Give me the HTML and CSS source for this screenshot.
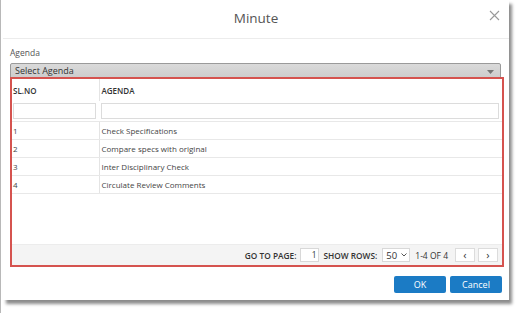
FILE: index.html
```html
<!DOCTYPE html>
<html>
<head>
<meta charset="utf-8">
<link rel="stylesheet" href="styles.css">
</head>
<body>
<div class="dialog">
  <div class="dlg-header">
    <span class="title">Minute</span>
    <span class="close">
      <svg width="11" height="11" viewBox="0 0 11 11"><path d="M1 1L10 10M10 1L1 10" stroke="#9a9a9a" stroke-width="1.1" fill="none"/></svg>
    </span>
  </div>
  <div class="dlg-body">
    <div class="label">Agenda</div>
    <div class="select-bar">
      <span>Select Agenda</span>
      <svg class="caret" width="7" height="4" viewBox="0 0 7 4"><path d="M0 0H7L3.5 4Z" fill="#777"/></svg>
    </div>
    <div class="grid-box">
      <table class="grid">
        <thead>
          <tr class="hdr"><th class="c1">SL.NO</th><th class="c2">AGENDA</th></tr>
          <tr class="filter"><td class="c1"><div class="finput"></div></td><td class="c2"><div class="finput"></div></td></tr>
        </thead>
        <tbody>
          <tr><td class="c1">1</td><td class="c2">Check Specifications</td></tr>
          <tr><td class="c1">2</td><td class="c2">Compare specs with original</td></tr>
          <tr><td class="c1">3</td><td class="c2">Inter Disciplinary Check</td></tr>
          <tr><td class="c1">4</td><td class="c2">Circulate Review Comments</td></tr>
        </tbody>
      </table>
      <div class="spacer"></div>
      <div class="pager">
        <span class="plabel">GO TO PAGE:</span>
        <span class="pinput">1</span>
        <span class="plabel">SHOW ROWS:</span>
        <span class="psel">50
          <svg width="6" height="4" viewBox="0 0 6 4"><path d="M0.5 0.5L3 3L5.5 0.5" stroke="#555" stroke-width="1" fill="none"/></svg>
        </span>
        <span class="pcount">1-4 OF 4</span>
        <span class="pbtn">&lsaquo;</span>
        <span class="pbtn">&rsaquo;</span>
      </div>
    </div>
  </div>
  <div class="dlg-footer">
    <button class="btn">OK</button>
    <button class="btn">Cancel</button>
  </div>
</div>
</body>
</html>
```

FILE: styles.css
```css
html, body {
  margin: 0;
  padding: 0;
  background: #ffffff;
}
body {
  font-family: "Open Sans", "Noto Sans", sans-serif;
  color: #444;
  padding-left: 2px;
  border-left: 1px solid #b8b8b8;
  width: 520px;
  height: 313px;
  box-sizing: border-box;
}
.dialog {
  width: 506px;
  height: 300px;
  background: #fff;
  box-shadow: 3px 4px 3px rgba(0,0,0,0.45);
  display: flex;
  flex-direction: column;
}
.dlg-header {
  height: 38px;
  border-bottom: 1px solid #ececec;
  display: flex;
  align-items: center;
  justify-content: center;
  position: relative;
}
.title {
  font-size: 13.5px;
  color: #555;
  margin-top: -2px;
}
.close {
  position: absolute;
  right: 9px;
  top: 10px;
  line-height: 0;
}
.dlg-body {
  padding: 8px 5px 0 7px;
}
.label {
  font-size: 8.5px;
  color: #555;
  line-height: 12px;
  height: 16px;
}
.select-bar {
  width: 491px;
  height: 15px;
  box-sizing: border-box;
  border: 1px solid #9a9a9a;
  border-radius: 2px 2px 0 0;
  background: linear-gradient(#dadada, #cdcdcd);
  display: flex;
  align-items: center;
  justify-content: space-between;
  padding: 0 6px 0 4px;
  font-size: 9px;
  color: #333;
}
.caret {
  margin-top: 3px;
}
.grid-box {
  width: 494px;
  height: 190px;
  box-sizing: border-box;
  border: 2px solid #d5534f;
  margin-top: -1px;
  display: flex;
  flex-direction: column;
}
.grid {
  border-collapse: collapse;
  width: 100%;
  font-size: 8px;
  color: #444;
}
.grid th, .grid td {
  padding: 0;
}
.grid .c1 {
  width: 83px;
  padding-left: 1px;
  border-right: 1px solid #e4e4e4;
}
.grid .c2 {
  padding-left: 2px;
  padding-right: 3px;
}
.hdr th {
  height: 21px;
  text-align: left;
  font-weight: 600;
  color: #333;
  font-size: 8px;
  padding-top: 1px;
}
.filter td {
  height: 20px;
  border-bottom: 1px solid #e8e8e8;
  vertical-align: middle;
}
.filter .c1 {
  border-right: none;
  padding-left: 1px;
  padding-right: 3px;
}
.finput {
  height: 16px;
  box-sizing: border-box;
  border: 1px solid #dcdcdc;
  background: #fff;
}
tbody td {
  height: 17px;
  border-bottom: 1px solid #e8e8e8;
}
.spacer {
  flex: 1;
}
.pager {
  height: 20px;
  background: #f4f4f4;
  border-top: 1px solid #ececec;
  display: flex;
  align-items: center;
  justify-content: flex-end;
  padding-right: 4px;
  font-size: 8.3px;
  font-weight: 600;
  color: #333;
}
.plabel {
  margin-right: 4px;
}
.pinput {
  width: 19px;
  height: 14px;
  box-sizing: border-box;
  border: 1px solid #d8d8d8;
  background: #fff;
  text-align: right;
  padding-right: 2px;
  font-weight: 400;
  line-height: 12px;
  margin-right: 4px;
}
.psel {
  width: 28px;
  height: 14px;
  box-sizing: border-box;
  border: 1px solid #d8d8d8;
  background: #fff;
  display: flex;
  align-items: center;
  gap: 4px;
  padding-left: 3px;
  font-size: 9.5px;
  font-weight: 400;
  margin-left: 1px;
  margin-right: 5px;
}
.pcount {
  font-weight: 400;
  font-size: 8.5px;
  margin-right: 4px;
}
.pbtn {
  width: 20px;
  height: 14px;
  box-sizing: border-box;
  border: 1px solid #dcdcdc;
  background: #fff;
  display: flex;
  align-items: center;
  justify-content: center;
  font-size: 11px;
  font-weight: 400;
  line-height: 1;
  margin-left: 3px;
  padding-bottom: 2px;
}
.dlg-footer {
  display: flex;
  justify-content: flex-end;
  gap: 4px;
  padding: 9px 7px 0 0;
}
.btn {
  width: 52px;
  height: 17px;
  border: none;
  border-radius: 2px;
  background: #1b7bc5;
  color: #fff;
  font-family: "Open Sans", "Noto Sans", sans-serif;
  font-size: 9px;
  padding: 0;
}
```
